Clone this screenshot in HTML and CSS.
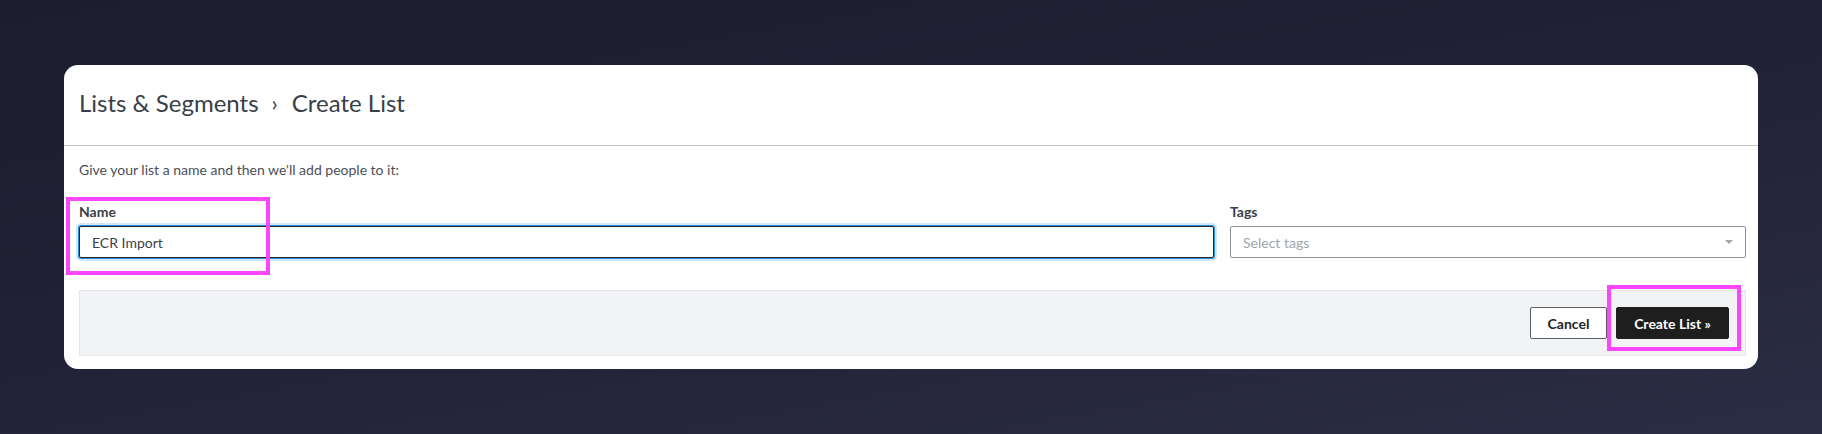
FILE: index.html
```html
<!DOCTYPE html>
<html>
<head>
<meta charset="utf-8">
<link rel="stylesheet" href="styles.css">
</head>
<body>
<div class="card">
  <div class="header">
    <h1 class="crumbs"><span>Lists &amp; Segments</span><span class="sep">›</span><span>Create List</span></h1>
  </div>
  <div class="content">
    <p class="intro">Give your list a name and then we'll add people to it:</p>
    <div class="fields">
      <div class="field">
        <label class="label">Name</label>
        <div class="input focused">ECR Import</div>
      </div>
      <div class="field">
        <label class="label">Tags</label>
        <div class="input select"><span class="placeholder">Select tags</span><span class="caret"></span></div>
      </div>
    </div>
    <div class="footer">
      <button class="btn btn-cancel">Cancel</button>
      <button class="btn btn-primary">Create List »</button>
    </div>
  </div>
  <div class="hl hl-name"></div>
  <div class="hl hl-create"></div>
</div>
</body>
</html>
```
FILE: styles.css
```css
html, body {
  margin: 0;
  height: 100%;
}
body {
  background: linear-gradient(170deg, #1c1d2f 0%, #202134 45%, #2b2d44 100%);
  font-family: "Lato", "Liberation Sans", sans-serif;
  padding: 65px 0 0 64px;
  box-sizing: border-box;
  overflow: hidden;
}
.card {
  position: relative;
  width: 1694px;
  height: 304px;
  background: #ffffff;
  border-radius: 14px;
  box-sizing: border-box;
}
.header {
  height: 80px;
  border-bottom: 1px solid #c3c5cb;
  padding: 23px 0 0 15px;
  box-sizing: content-box;
  height: 57px;
}
.crumbs {
  margin: 0;
  font-weight: 400;
  font-size: 24px;
  line-height: 30px;
  color: #383f48;
  display: flex;
  gap: 0;
}
.crumbs .sep {
  margin: 0 14px 0 13px;
  font-size: 22px;
}
.content {
  padding: 0 12px 13px 15px;
}
.intro {
  margin: 14px 0 0;
  font-size: 14px;
  line-height: 20px;
  color: #4a5058;
}
.fields {
  display: grid;
  grid-template-columns: 1135px 1fr;
  column-gap: 16px;
  margin-top: 22px;
}
.field {
  display: flex;
  flex-direction: column;
}
.label {
  font-size: 14px;
  font-weight: 700;
  line-height: 20px;
  color: #3a3f46;
  margin-bottom: 4px;
}
.input {
  height: 32px;
  box-sizing: border-box;
  border: 1px solid #8c9097;
  border-radius: 2px;
  padding: 0 12px;
  display: flex;
  align-items: center;
  font-size: 14px;
  color: #3b3f45;
}
.input.focused {
  border-color: #23272d;
  box-shadow: 0 0 0 1px #2f8fd6, 0 0 0 3px #d2e6f6;
}
.select {
  justify-content: space-between;
}
.placeholder {
  color: #a0a4aa;
}
.caret {
  width: 0;
  height: 0;
  border-left: 4px solid transparent;
  border-right: 4px solid transparent;
  border-top: 4px solid #a2a6ad;
}
.footer {
  margin-top: 32px;
  height: 66px;
  box-sizing: border-box;
  background: #f2f3f5;
  border: 1px solid #e6e7ea;
  display: flex;
  justify-content: flex-end;
  align-items: center;
  padding-right: 16px;
  gap: 9px;
}
.btn {
  height: 32px;
  font-family: "Lato", "Liberation Sans", sans-serif;
  font-size: 14px;
  font-weight: 700;
  border-radius: 2px;
  cursor: pointer;
}
.btn-cancel {
  width: 77px;
  background: #ffffff;
  border: 1px solid #5a5d62;
  color: #222427;
}
.btn-primary {
  width: 113px;
  background: #1e1e1f;
  border: 1px solid #1e1e1f;
  color: #ffffff;
}
.hl {
  position: absolute;
  border: 4px solid #fd45fd;
  box-sizing: border-box;
  pointer-events: none;
}
.hl-name {
  left: 2px;
  top: 132px;
  width: 204px;
  height: 78px;
}
.hl-create {
  left: 1543px;
  top: 220px;
  width: 134px;
  height: 66px;
}
```
